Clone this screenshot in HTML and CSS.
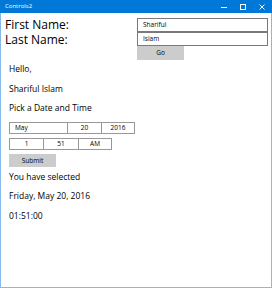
FILE: index.html
```html
<!DOCTYPE html>
<html>
<head>
<meta charset="utf-8">
<link rel="stylesheet" href="styles.css">
</head>
<body>
<div class="window">
  <div class="titlebar">
    <span class="title">Controls2</span>
    <div class="controls">
      <svg class="ctl" width="8" height="8" viewBox="0 0 8 8"><line x1="1" y1="4.5" x2="7" y2="4.5" stroke="#fff" stroke-width="1"/></svg>
      <svg class="ctl" width="8" height="8" viewBox="0 0 8 8"><rect x="1.5" y="1.5" width="5" height="5" fill="none" stroke="#fff" stroke-width="1"/></svg>
      <svg class="ctl" width="8" height="8" viewBox="0 0 8 8"><path d="M1.5 1.5 L6.5 6.5 M6.5 1.5 L1.5 6.5" stroke="#fff" stroke-width="1"/></svg>
    </div>
  </div>
  <div class="content">
    <div class="names">
      <div class="labels">
        <div class="label">First Name:</div>
        <div class="label">Last Name:</div>
      </div>
      <div class="inputs">
        <div class="textbox">Shariful</div>
        <div class="textbox">Islam</div>
        <div class="button go">Go</div>
      </div>
    </div>
    <div class="main">
      <p class="line">Hello,</p>
      <p class="line">Shariful Islam</p>
      <p class="line">Pick a Date and Time</p>
      <div class="picker date">
        <div class="cell c-month">May</div>
        <div class="cell c-day">20</div>
        <div class="cell c-year">2016</div>
      </div>
      <div class="picker time">
        <div class="cell c-h">1</div>
        <div class="cell c-m">51</div>
        <div class="cell c-ap">AM</div>
      </div>
      <div class="button submit">Submit</div>
      <p class="line sel">You have selected</p>
      <p class="line">Friday, May 20, 2016</p>
      <p class="line">01:51:00</p>
    </div>
  </div>
</div>
</body>
</html>
```

FILE: styles.css
```css
html, body {
  margin: 0;
  padding: 0;
  background: #ffffff;
}
.window {
  width: 272px;
  height: 288px;
  box-sizing: border-box;
  border: 1px solid #86b9e9;
  border-top: none;
  font-family: "Open Sans", "Noto Sans", sans-serif;
  color: #000;
  display: flex;
  flex-direction: column;
}
.titlebar {
  height: 13px;
  margin: 0 -1px;
  background: #0078d7;
  display: flex;
  align-items: center;
  justify-content: space-between;
  padding: 0 6px 0 5px;
}
.title {
  color: #fff;
  font-size: 6px;
  line-height: 13px;
}
.controls {
  display: flex;
  gap: 11px;
  align-items: center;
}
.ctl { display: block; }
.content {
  flex: 1;
}
.names {
  display: flex;
  justify-content: space-between;
  padding: 5px 3px 0 4px;
}
.label {
  font-size: 12px;
  line-height: 14px;
  height: 14px;
  margin-bottom: 1px;
}
.inputs {
  width: 131px;
  display: flex;
  flex-direction: column;
}
.textbox {
  height: 12px;
  border: 1px solid #7a7a7a;
  font-size: 6.5px;
  line-height: 12px;
  padding-left: 5px;
}
.button {
  background: #cccccc;
  font-size: 6.5px;
  text-align: center;
}
.go {
  width: 47px;
  height: 14px;
  line-height: 14px;
}
.main {
  padding: 0 0 0 8px;
}
.line {
  margin: 0;
  font-size: 8.5px;
  line-height: 19.5px;
}
.main .line:first-child { margin-top: -1px; }
.picker {
  display: flex;
  border: 1px solid #999;
  height: 10px;
  font-size: 6.5px;
  line-height: 10px;
}
.cell {
  border-left: 1px solid #999;
}
.cell:first-child { border-left: none; }
.date {
  width: 124px;
  margin-top: 4px;
}
.c-month { width: 57px; padding-left: 5px; box-sizing: border-box; }
.c-day { width: 33px; text-align: center; }
.c-year { flex: 1; text-align: center; }
.time {
  width: 101px;
  margin-top: 4px;
}
.c-h { width: 33px; text-align: center; }
.c-m { width: 34px; text-align: center; }
.c-ap { flex: 1; text-align: center; }
.submit {
  width: 47px;
  height: 13px;
  line-height: 13px;
  margin-top: 4px;
}
.sel { margin-top: 0; }
```
